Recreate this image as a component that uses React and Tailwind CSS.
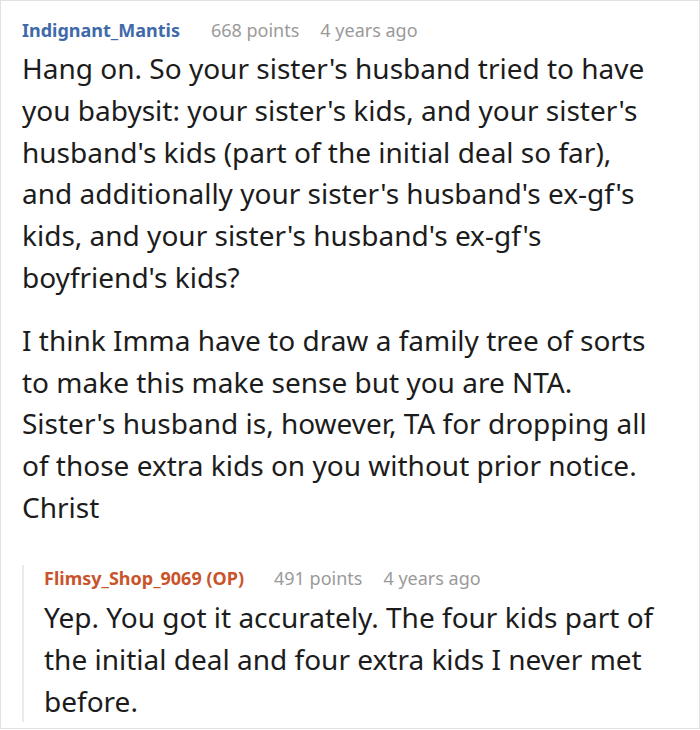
export default function App() {
  return (
    <div
      className="h-[729px] w-[700px] overflow-hidden border border-[#e2e2e2] bg-white text-[#1c1c1c]"
      style={{ fontFamily: '"Noto Sans", sans-serif' }}
    >
      <div className="pl-[21px] pr-[31px] pt-[16px]">
        <div className="flex items-baseline text-[18px] leading-[27px]">
          <span className="font-bold text-[#3f6aaa]">Indignant_Mantis</span>
          <span className="ml-[31px] text-[#9a9a9a]">668 points</span>
          <span className="ml-[21px] text-[#9a9a9a]">4 years ago</span>
        </div>
        <div className="mt-[4px] text-[28px] leading-[41.8px]">
          <p>
            Hang on. So your sister's husband tried to have you babysit: your sister's kids, and your
            sister's husband's kids (part of the initial deal so far), and additionally your sister's
            husband's ex-gf's kids, and your sister's husband's ex-gf's boyfriend's kids?
          </p>
          <p className="mt-[21px]">
            I think Imma have to draw a family tree of sorts to make this make sense but you are NTA.
            Sister's husband is, however, TA for dropping all of those extra kids on you without prior
            notice. Christ
          </p>
        </div>
        <div className="mt-[36px] -mr-[10px] border-l-2 border-[#ebebeb] pl-[20px]">
          <div className="flex items-baseline text-[18px] leading-[27px]">
            <span className="font-bold text-[#c9542c]">Flimsy_Shop_9069 (OP)</span>
            <span className="ml-[30px] text-[#9a9a9a]">491 points</span>
            <span className="ml-[21px] text-[#9a9a9a]">4 years ago</span>
          </div>
          <p className="mt-[4px] -mb-[8px] text-[28px] leading-[42px]">
            Yep. You got it accurately. The four kids part of the initial deal and four extra kids I
            never met before.
          </p>
        </div>
      </div>
    </div>
  );
}
